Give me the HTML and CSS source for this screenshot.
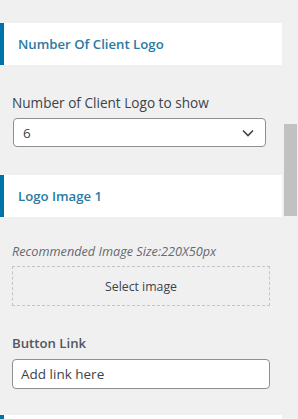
FILE: index.html
```html
<!DOCTYPE html>
<html lang="en">
<head>
    <meta charset="UTF-8">
    <title>Client Logo Settings</title>
    <link rel="stylesheet" href="styles.css">
</head>
<body>
<div class="panel">
    <div class="section-title">Number Of Client Logo</div>
    <div class="control">
        <label class="control-label">Number of Client Logo to show</label>
        <div class="select-box">
            <span>6</span>
            <svg width="12" height="8" viewBox="0 0 12 8"><path d="M1 1.5 L6 6.5 L11 1.5" fill="none" stroke="#3c434a" stroke-width="1.6"/></svg>
        </div>
    </div>

    <div class="section-title">Logo Image 1</div>
    <div class="control">
        <p class="hint">Recommended Image Size:220X50px</p>
        <div class="upload-box">Select image</div>
    </div>

    <div class="control">
        <label class="control-label strong">Button Link</label>
        <div class="text-input">Add link here</div>
    </div>

    <div class="section-title"></div>
</div>
<div class="scrollbar"></div>
</body>
</html>
```

FILE: styles.css
```css
body {
    font-family: "Open Sans", "Noto Sans", sans-serif;
    background-color: #f0f0f0;
    margin: 0;
    padding: 0;
    height: 419px;
    overflow: hidden;
    color: #3c434a;
}
.panel {
    width: 282px;
    padding-top: 23px;
}
.section-title {
    height: 42px;
    box-sizing: border-box;
    background-color: #fff;
    border-left: 4px solid #0073aa;
    padding-left: 14px;
    line-height: 42px;
    font-size: 13.2px;
    font-weight: 600;
    color: #2a7aa3;
}
.control {
    padding: 0 12px;
}
.control-label {
    display: block;
    font-size: 13.6px;
    line-height: 18px;
    padding-top: 29px;
    margin-bottom: 6px;
    color: #3c434a;
}
.control-label.strong {
    font-size: 13.2px;
    font-weight: 600;
    color: #50575e;
    padding-top: 28px;
    margin-bottom: 7px;
}
.select-box {
    width: 253px;
    height: 29px;
    box-sizing: border-box;
    margin-left: 1px;
    margin-bottom: 28px;
    border: 1px solid #8c8f94;
    border-radius: 4px;
    background-color: #fff;
    display: flex;
    align-items: center;
    justify-content: space-between;
    padding: 0 11px 0 9px;
    font-size: 13.5px;
}
.hint {
    margin: 0;
    padding-top: 25px;
    font-size: 12.7px;
    line-height: 18px;
    font-style: italic;
    color: #646970;
}
.upload-box {
    margin-top: 6px;
    height: 40px;
    box-sizing: border-box;
    border: 1px dashed #c3c4c7;
    display: flex;
    align-items: center;
    justify-content: center;
    font-size: 12.3px;
    color: #3c434a;
}
.text-input {
    height: 30px;
    box-sizing: border-box;
    border: 1px solid #8c8f94;
    border-radius: 4px;
    background-color: #fff;
    display: flex;
    align-items: center;
    padding-left: 8px;
    font-size: 13.5px;
    margin-bottom: 26px;
}
.scrollbar {
    position: absolute;
    left: 284px;
    top: 124px;
    width: 13px;
    height: 92px;
    background-color: #c1c1c1;
}
```
